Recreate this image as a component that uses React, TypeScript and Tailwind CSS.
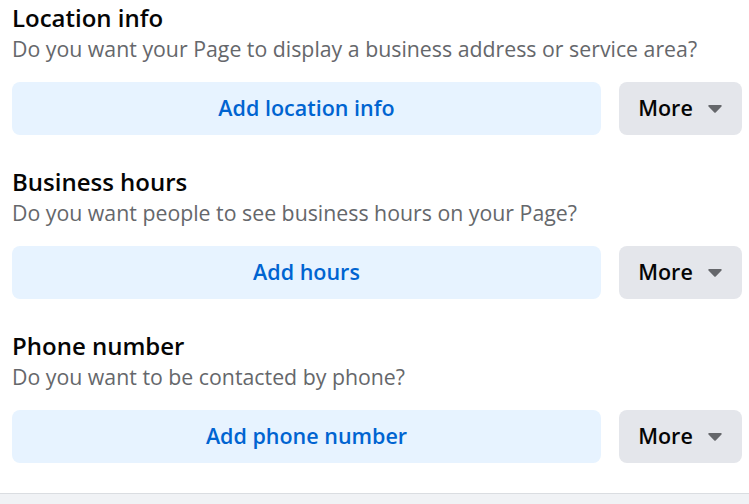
import React from 'react';

const sections = [
  {
    title: 'Location info',
    question: 'Do you want your Page to display a business address or service area?',
    action: 'Add location info',
  },
  {
    title: 'Business hours',
    question: 'Do you want people to see business hours on your Page?',
    action: 'Add hours',
  },
  {
    title: 'Phone number',
    question: 'Do you want to be contacted by phone?',
    action: 'Add phone number',
  },
];

const Caret = () => (
  <svg width="16" height="10" viewBox="0 0 16 10" className="ml-[14px]">
    <path d="M2.2 1h11.6c.9 0 1.3 1 .7 1.6L8.7 8.4a1 1 0 0 1-1.4 0L1.5 2.6C.9 2 1.3 1 2.2 1z" fill="#65676b" />
  </svg>
);

export default function App() {
  return (
    <div className="w-[749px] h-[504px] bg-white flex flex-col font-['Open_Sans',sans-serif]">
      <div className="flex-1 pl-3 pr-[7px]">
        {sections.map((s) => (
          <div key={s.title} className="pt-[3px] pb-[29px]">
            <h2 className="text-[24px] leading-[30px] font-semibold text-[#050505]">{s.title}</h2>
            <p className="mt-[3px] text-[21.3px] leading-[26px] text-[#65676b]">{s.question}</p>
            <div className="mt-[20px] flex gap-[18px]">
              <button className="flex-1 h-[53px] rounded-[8px] bg-[#e7f3ff] text-[#0064d1] text-[21.5px] font-semibold">
                {s.action}
              </button>
              <button className="w-[123px] h-[53px] rounded-[8px] bg-[#e4e6eb] text-[#050505] text-[21.5px] font-semibold flex items-center justify-center">
                More
                <Caret />
              </button>
            </div>
          </div>
        ))}
      </div>
      <div className="h-[11px] bg-[#f0f2f5] border-t border-[#dadde1]" />
    </div>
  );
}
